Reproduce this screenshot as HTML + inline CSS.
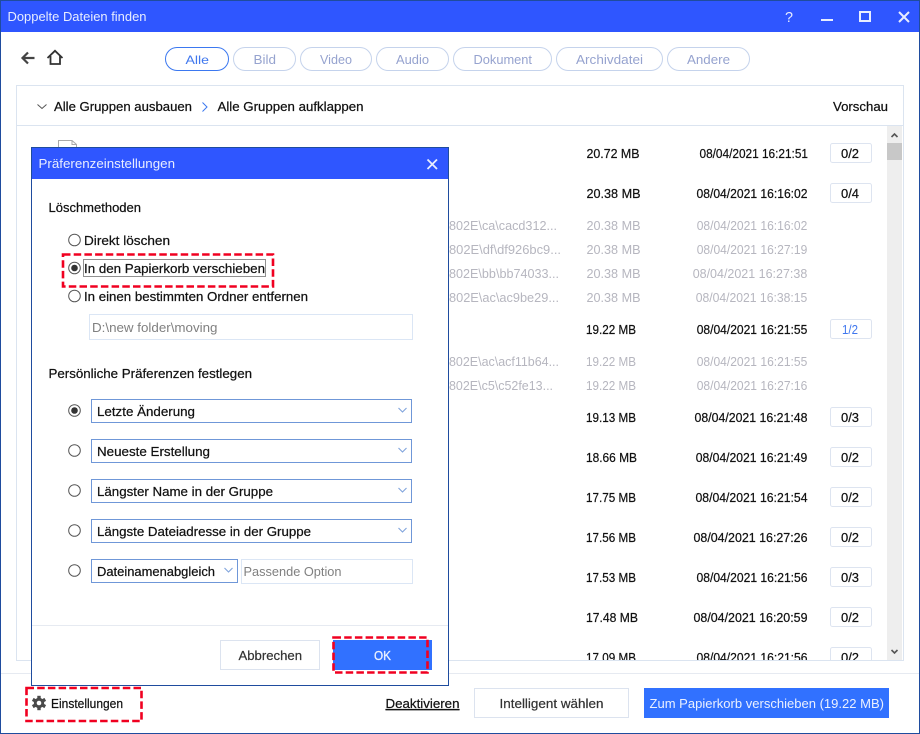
<!DOCTYPE html>
<html lang="de"><head><meta charset="utf-8"><title>Doppelte Dateien finden</title>
<style>
html,body{margin:0;padding:0;background:#fff;width:920px;height:734px;overflow:hidden}
svg{display:block;position:absolute;left:0;top:0}
text{font-family:"Liberation Sans",sans-serif;font-size:12.5px;fill:#111;white-space:pre}
text:not([style]):not(.t){stroke:#111;stroke-width:.22}
.g text{fill:#b6b6bf;stroke:none!important}
.tab{fill:#fff;stroke:#c5d3ec}
.t{fill:#96a3cf}
.sel{fill:#fff;stroke:#6f97d8}
.btn{fill:#fff;stroke:#dce3ef}
.ck{fill:#fff;stroke:#dde4f0}
.r{fill:#fff;stroke:#555;stroke-width:1}
.d{fill:none;stroke:#f00020;stroke-width:2.6;stroke-dasharray:7.5 3.2}
.ar{fill:none;stroke:#7fa3dc;stroke-width:1.1}
</style></head><body>
<svg width="920" height="734" viewBox="0 0 920 734" xmlns="http://www.w3.org/2000/svg">
<defs><clipPath id="c"><rect x="17" y="126" width="886" height="534"/></clipPath></defs>
<rect x="0.5" y="0.5" width="919" height="733" fill="#fff" stroke="#1f4c9e"/>
<rect x="1" y="1" width="918" height="31" fill="#2f56ff"/>
<text x="7.5" y="21" textLength="139" lengthAdjust="spacingAndGlyphs" style="fill:#e8edff">Doppelte Dateien finden</text>
<text x="785" y="22" textLength="8" lengthAdjust="spacingAndGlyphs" style="fill:#e8edff;font-size:15px">?</text>
<path d="M821 20H833" stroke="#e8edff" stroke-width="2" fill="none"/>
<rect x="860" y="12" width="10" height="9" fill="none" stroke="#e8edff" stroke-width="2"/>
<path d="M899 12L909 22M909 12L899 22" stroke="#e8edff" stroke-width="2" fill="none"/>

<path d="M23 58H34.5M28 52.5L22.5 58L28 63.5" fill="none" stroke="#444" stroke-width="2.2"/>
<path d="M47.5 58L55 50.8L62.5 58M50.5 56V64H60V56" fill="none" stroke="#333" stroke-width="1.8"/>

<rect class="tab" x="165.5" y="47.5" width="63" height="23" rx="11.5" style="stroke:#3b78f0"/>
<rect class="tab" x="233.5" y="47.5" width="62" height="23" rx="11.5"/>
<rect class="tab" x="300.5" y="47.5" width="71" height="23" rx="11.5"/>
<rect class="tab" x="376.5" y="47.5" width="72" height="23" rx="11.5"/>
<rect class="tab" x="453.5" y="47.5" width="98" height="23" rx="11.5"/>
<rect class="tab" x="556.5" y="47.5" width="106" height="23" rx="11.5"/>
<rect class="tab" x="667.5" y="47.5" width="82" height="23" rx="11.5"/>
<text x="185.5" y="64" textLength="23.5" lengthAdjust="spacingAndGlyphs" style="fill:#3f77ee;font-size:12px">Alle</text>
<text class="t" x="253.5" y="64" textLength="22.5" lengthAdjust="spacingAndGlyphs">Bild</text>
<text class="t" x="320" y="64" textLength="32" lengthAdjust="spacingAndGlyphs">Video</text>
<text class="t" x="396" y="64" textLength="33" lengthAdjust="spacingAndGlyphs">Audio</text>
<text class="t" x="473.5" y="64" textLength="58.5" lengthAdjust="spacingAndGlyphs">Dokument</text>
<text class="t" x="576" y="64" textLength="67" lengthAdjust="spacingAndGlyphs">Archivdatei</text>
<text class="t" x="687" y="64" textLength="43" lengthAdjust="spacingAndGlyphs">Andere</text>

<rect x="16.5" y="85.5" width="887" height="575" fill="#fff" stroke="#dbe4f0"/>
<path d="M17 125.5H903" stroke="#dbe4f0"/>
<path d="M37.5 104.5L42 108.5L46.5 104.5" fill="none" stroke="#555"/>
<path d="M202.5 102.5L207 107L202.5 111.5" fill="none" stroke="#3b78f0"/>
<text x="54" y="111" textLength="138" lengthAdjust="spacingAndGlyphs">Alle Gruppen ausbauen</text>
<text x="217.5" y="111" textLength="146" lengthAdjust="spacingAndGlyphs">Alle Gruppen aufklappen</text>
<text x="833" y="111" textLength="55" lengthAdjust="spacingAndGlyphs">Vorschau</text>

<rect x="887" y="126" width="15" height="534" fill="#eeeeee"/>
<rect x="887" y="143" width="15" height="17" fill="#c8c8c8"/>
<path d="M891.5 137L894.5 134L897.5 137" fill="none" stroke="#555" stroke-width="1.6"/>
<path d="M891.5 650L894.5 653L897.5 650" fill="none" stroke="#555" stroke-width="1.6"/>

<path d="M58.5 147V140.5H72L76.5 144.5V147M72 140.5V144.5H76.5" fill="none" stroke="#aaa"/>

<g clip-path="url(#c)">
<text x="586.5" y="158" textLength="53" lengthAdjust="spacingAndGlyphs">20.72 MB</text>
<text x="699.5" y="158" textLength="108.5" lengthAdjust="spacingAndGlyphs">08/04/2021 16:21:51</text>
<text x="586.5" y="198" textLength="54" lengthAdjust="spacingAndGlyphs">20.38 MB</text>
<text x="696.5" y="198" textLength="111" lengthAdjust="spacingAndGlyphs">08/04/2021 16:16:02</text>
<g class="g">
<text x="449" y="230" textLength="108" lengthAdjust="spacingAndGlyphs">802E\ca\cacd312...</text>
<text x="586.5" y="230" textLength="54" lengthAdjust="spacingAndGlyphs">20.38 MB</text>
<text x="696.7" y="230" textLength="110.6" lengthAdjust="spacingAndGlyphs">08/04/2021 16:16:02</text>
<text x="449" y="254" textLength="112" lengthAdjust="spacingAndGlyphs">802E\df\df926bc9...</text>
<text x="586.5" y="254" textLength="54" lengthAdjust="spacingAndGlyphs">20.38 MB</text>
<text x="696.7" y="254" textLength="110.6" lengthAdjust="spacingAndGlyphs">08/04/2021 16:27:19</text>
<text x="449" y="278" textLength="110" lengthAdjust="spacingAndGlyphs">802E\bb\bb74033...</text>
<text x="586.5" y="278" textLength="54" lengthAdjust="spacingAndGlyphs">20.38 MB</text>
<text x="692.7" y="278" textLength="114.6" lengthAdjust="spacingAndGlyphs">08/04/2021 16:27:38</text>
<text x="449" y="302" textLength="110" lengthAdjust="spacingAndGlyphs">802E\ac\ac9be29...</text>
<text x="586.5" y="302" textLength="54" lengthAdjust="spacingAndGlyphs">20.38 MB</text>
<text x="695.7" y="302" textLength="111.6" lengthAdjust="spacingAndGlyphs">08/04/2021 16:38:15</text>
<text x="449" y="366" textLength="110" lengthAdjust="spacingAndGlyphs">802E\ac\acf11b64...</text>
<text x="586" y="366" textLength="50" lengthAdjust="spacingAndGlyphs">19.22 MB</text>
<text x="696.7" y="366" textLength="110.6" lengthAdjust="spacingAndGlyphs">08/04/2021 16:21:55</text>
<text x="449" y="390" textLength="104" lengthAdjust="spacingAndGlyphs">802E\c5\c52fe13...</text>
<text x="586" y="390" textLength="50" lengthAdjust="spacingAndGlyphs">19.22 MB</text>
<text x="696.7" y="390" textLength="110.6" lengthAdjust="spacingAndGlyphs">08/04/2021 16:27:16</text>
</g>
<text x="586" y="334" textLength="50" lengthAdjust="spacingAndGlyphs">19.22 MB</text>
<text x="696.7" y="334" textLength="110.6" lengthAdjust="spacingAndGlyphs">08/04/2021 16:21:55</text>
<text x="586" y="422" textLength="50" lengthAdjust="spacingAndGlyphs">19.13 MB</text>
<text x="694.5" y="422" textLength="113" lengthAdjust="spacingAndGlyphs">08/04/2021 16:21:48</text>
<text x="586" y="462" textLength="51" lengthAdjust="spacingAndGlyphs">18.66 MB</text>
<text x="695.7" y="462" textLength="111.6" lengthAdjust="spacingAndGlyphs">08/04/2021 16:21:49</text>
<text x="586" y="502" textLength="50" lengthAdjust="spacingAndGlyphs">17.75 MB</text>
<text x="695.5" y="502" textLength="112" lengthAdjust="spacingAndGlyphs">08/04/2021 16:21:54</text>
<text x="586" y="542" textLength="50" lengthAdjust="spacingAndGlyphs">17.56 MB</text>
<text x="693.5" y="542" textLength="114" lengthAdjust="spacingAndGlyphs">08/04/2021 16:27:26</text>
<text x="586" y="582" textLength="50" lengthAdjust="spacingAndGlyphs">17.53 MB</text>
<text x="696.5" y="582" textLength="111" lengthAdjust="spacingAndGlyphs">08/04/2021 16:21:56</text>
<text x="586" y="622" textLength="52" lengthAdjust="spacingAndGlyphs">17.48 MB</text>
<text x="693.5" y="622" textLength="114" lengthAdjust="spacingAndGlyphs">08/04/2021 16:20:59</text>
<text x="586" y="662" textLength="50" lengthAdjust="spacingAndGlyphs">17.09 MB</text>
<text x="696.5" y="662" textLength="111" lengthAdjust="spacingAndGlyphs">08/04/2021 16:21:56</text>

<rect class="ck" x="830.5" y="143.5" width="41" height="19" rx="2"/>
<rect class="ck" x="830.5" y="183.5" width="41" height="19" rx="2"/>
<rect class="ck" x="830.5" y="319.5" width="41" height="19" rx="2"/>
<rect class="ck" x="830.5" y="407.5" width="41" height="19" rx="2"/>
<rect class="ck" x="830.5" y="447.5" width="41" height="19" rx="2"/>
<rect class="ck" x="830.5" y="487.5" width="41" height="19" rx="2"/>
<rect class="ck" x="830.5" y="527.5" width="41" height="19" rx="2"/>
<rect class="ck" x="830.5" y="567.5" width="41" height="19" rx="2"/>
<rect class="ck" x="830.5" y="607.5" width="41" height="19" rx="2"/>
<rect class="ck" x="830.5" y="647.5" width="41" height="19" rx="2"/>
<text x="841" y="158" textLength="18" lengthAdjust="spacingAndGlyphs">0/2</text>
<text x="841" y="198" textLength="18" lengthAdjust="spacingAndGlyphs">0/4</text>
<text x="842" y="334" textLength="16" lengthAdjust="spacingAndGlyphs" style="fill:#3f77ee">1/2</text>
<text x="841" y="422" textLength="18" lengthAdjust="spacingAndGlyphs">0/3</text>
<text x="841" y="462" textLength="18" lengthAdjust="spacingAndGlyphs">0/2</text>
<text x="841" y="502" textLength="18" lengthAdjust="spacingAndGlyphs">0/2</text>
<text x="841" y="542" textLength="18" lengthAdjust="spacingAndGlyphs">0/2</text>
<text x="841" y="582" textLength="18" lengthAdjust="spacingAndGlyphs">0/3</text>
<text x="841" y="622" textLength="18" lengthAdjust="spacingAndGlyphs">0/2</text>
<text x="841" y="662" textLength="18" lengthAdjust="spacingAndGlyphs">0/2</text>
</g>

<path d="M1 673.5H919" stroke="#e6eaf1"/>
<rect class="d" x="26.5" y="688" width="115" height="33"/>
<g transform="translate(39 703)" fill="#4a4a4a">
<circle r="5.2"/>
<rect x="-1.7" y="-7.2" width="3.4" height="14.4"/>
<rect x="-1.7" y="-7.2" width="3.4" height="14.4" transform="rotate(60)"/>
<rect x="-1.7" y="-7.2" width="3.4" height="14.4" transform="rotate(120)"/>
<circle r="2.3" fill="#fff"/>
</g>
<text x="51" y="708" textLength="72" lengthAdjust="spacingAndGlyphs">Einstellungen</text>
<text x="385.5" y="708" textLength="74" lengthAdjust="spacingAndGlyphs" style="text-decoration:underline;stroke:#111;stroke-width:.22">Deaktivieren</text>
<rect class="btn" x="474.5" y="688.5" width="154" height="29"/>
<text x="499.5" y="708" textLength="104" lengthAdjust="spacingAndGlyphs" style="fill:#333;stroke:#333;stroke-width:.2">Intelligent wählen</text>
<rect x="644" y="688" width="245" height="30" fill="#3171ff"/>
<text x="649.5" y="708" textLength="234.5" lengthAdjust="spacingAndGlyphs" style="fill:#eaf0ff">Zum Papierkorb verschieben (19.22 MB)</text>

<!-- dialog -->
<rect x="31.5" y="147.5" width="417" height="538" fill="#fff" stroke="#1f4c9e"/>
<rect x="32" y="148" width="416" height="31" fill="#2f56ff"/>
<text x="38.5" y="168" textLength="136.5" lengthAdjust="spacingAndGlyphs" style="fill:#e8edff">Präferenzeinstellungen</text>
<path d="M427.5 159.5L437 169M437 159.5L427.5 169" stroke="#e8edff" stroke-width="1.8" fill="none"/>
<text x="48.5" y="212" textLength="92.5" lengthAdjust="spacingAndGlyphs">Löschmethoden</text>

<circle class="r" cx="74.5" cy="240" r="5.8"/>
<text x="84" y="245" textLength="86" lengthAdjust="spacingAndGlyphs">Direkt löschen</text>
<rect class="d" x="63" y="254.5" width="210" height="32"/>
<circle class="r" cx="74.5" cy="268" r="5.8"/><circle cx="74.5" cy="268" r="3.3" fill="#333"/>
<rect x="83.5" y="259.5" width="182" height="17" fill="none" stroke="#222" stroke-dasharray="1 1" shape-rendering="crispEdges"/>
<text x="84" y="273" textLength="181" lengthAdjust="spacingAndGlyphs">In den Papierkorb verschieben</text>
<circle class="r" cx="74.5" cy="296" r="5.8"/>
<text x="84" y="301" textLength="224" lengthAdjust="spacingAndGlyphs">In einen bestimmten Ordner entfernen</text>
<rect x="89.5" y="314.5" width="323" height="25" fill="#fff" stroke="#dbe6f5"/>
<text x="92" y="332" textLength="125.5" lengthAdjust="spacingAndGlyphs" style="fill:#808080">D:\new folder\moving</text>
<text x="48.5" y="378" textLength="203.5" lengthAdjust="spacingAndGlyphs">Persönliche Präferenzen festlegen</text>

<circle class="r" cx="74.5" cy="410.5" r="5.8"/><circle cx="74.5" cy="410.5" r="3.3" fill="#333"/>
<rect class="sel" x="91.5" y="399.5" width="320" height="23"/>
<text x="97" y="416" textLength="98" lengthAdjust="spacingAndGlyphs">Letzte Änderung</text>
<path class="ar" d="M398.5 408L402.5 412L406.5 408"/>
<circle class="r" cx="74.5" cy="450.5" r="5.8"/>
<rect class="sel" x="91.5" y="439.5" width="320" height="23"/>
<text x="97" y="456" textLength="113" lengthAdjust="spacingAndGlyphs">Neueste Erstellung</text>
<path class="ar" d="M398.5 448L402.5 452L406.5 448"/>
<circle class="r" cx="74.5" cy="490.5" r="5.8"/>
<rect class="sel" x="91.5" y="479.5" width="320" height="23"/>
<text x="97" y="496" textLength="176" lengthAdjust="spacingAndGlyphs">Längster Name in der Gruppe</text>
<path class="ar" d="M398.5 488L402.5 492L406.5 488"/>
<circle class="r" cx="74.5" cy="530.5" r="5.8"/>
<rect class="sel" x="91.5" y="519.5" width="320" height="23"/>
<text x="97" y="536" textLength="214" lengthAdjust="spacingAndGlyphs">Längste Dateiadresse in der Gruppe</text>
<path class="ar" d="M398.5 528L402.5 532L406.5 528"/>
<circle class="r" cx="74.5" cy="570.5" r="5.8"/>
<rect class="sel" x="91.5" y="559.5" width="146" height="23"/>
<text x="97" y="576" textLength="118" lengthAdjust="spacingAndGlyphs">Dateinamenabgleich</text>
<path class="ar" d="M224.5 568L228.5 572L232.5 568"/>
<rect x="241.5" y="559.5" width="171" height="24" fill="#fff" stroke="#dbe6f5"/>
<text x="243.5" y="576" textLength="98" lengthAdjust="spacingAndGlyphs" style="fill:#808080">Passende Option</text>

<path d="M32 625.5H448" stroke="#e6eaf1"/>
<rect class="btn" x="220.5" y="640.5" width="99" height="29"/>
<text x="238.5" y="660" textLength="63.5" lengthAdjust="spacingAndGlyphs" style="fill:#333;stroke:#333;stroke-width:.2">Abbrechen</text>
<rect x="333" y="640" width="99" height="30" fill="#3171ff"/>
<text x="374" y="660" textLength="17" lengthAdjust="spacingAndGlyphs" style="fill:#eaf0ff;stroke:#eaf0ff;stroke-width:.3">OK</text>
<rect class="d" x="333.5" y="637.5" width="94" height="35"/>
</svg>
</body></html>
